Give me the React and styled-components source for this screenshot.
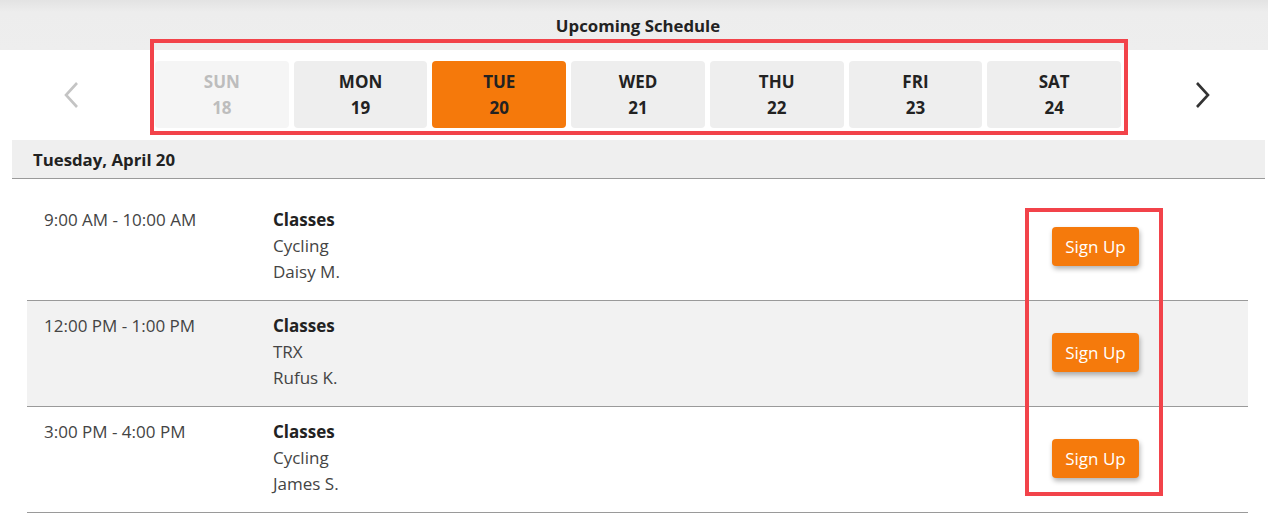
import React from 'react';
import styled, { createGlobalStyle } from 'styled-components';

const GlobalStyle = createGlobalStyle`
    html, body {
        margin: 0;
        padding: 0;
        background: #ffffff;
    }
    body {
        font-family: "Open Sans", "Noto Sans", sans-serif;
        color: #333333;
    }
`;

const days = [
    { name: 'SUN', date: 18, state: 'past' },
    { name: 'MON', date: 19 },
    { name: 'TUE', date: 20, state: 'active' },
    { name: 'WED', date: 21 },
    { name: 'THU', date: 22 },
    { name: 'FRI', date: 23 },
    { name: 'SAT', date: 24 }
];

const sessions = [
    { time: '9:00 AM - 10:00 AM', type: 'Classes', name: 'Cycling', coach: 'Daisy M.' },
    { time: '12:00 PM - 1:00 PM', type: 'Classes', name: 'TRX', coach: 'Rufus K.', shaded: true },
    { time: '3:00 PM - 4:00 PM', type: 'Classes', name: 'Cycling', coach: 'James S.' }
];

function Chevron({ dir, color }) {
    const points = dir === 'left' ? '14,2 3,14 14,26' : '2,2 13,14 2,26';
    return (
        <svg width="16" height="28" viewBox="0 0 16 28">
            <polyline points={points} fill="none" stroke={color} strokeWidth="2.6" strokeLinecap="butt" strokeLinejoin="miter" />
        </svg>
    );
}

export default function App() {
    return (
        <>
            <GlobalStyle />
            <Page>
                <Header>Upcoming Schedule</Header>

                <WeekNav>
                    <NavButton $side="left">
                        <Chevron dir="left" color="#c4c4c4" />
                    </NavButton>

                    <DayGrid>
                        {days.map(day => (
                            <DayCell key={day.name} $state={day.state}>
                                <span>{day.name}</span>
                                <span>{day.date}</span>
                            </DayCell>
                        ))}
                        <Highlight $top={-22} $left={-5} $right={-7} $bottom={-7} />
                    </DayGrid>

                    <NavButton $side="right">
                        <Chevron dir="right" color="#333333" />
                    </NavButton>
                </WeekNav>

                <DateBar>Tuesday, April 20</DateBar>

                <SessionList>
                    {sessions.map((s, index) => (
                        <SessionRow key={index} $shaded={s.shaded}>
                            <Time>{s.time}</Time>
                            <Details>
                                <strong>{s.type}</strong>
                                <span>{s.name}</span>
                                <span>{s.coach}</span>
                            </Details>
                            <SignUpButton>Sign Up</SignUpButton>
                        </SessionRow>
                    ))}
                    <ButtonHighlight />
                </SessionList>
            </Page>
        </>
    );
}

const Page = styled.div`
    width: 1268px;
    min-height: 521px;
    background: #ffffff;
`;

const Header = styled.header`
    height: 50px;
    display: flex;
    align-items: center;
    justify-content: center;
    background: linear-gradient(#e3e3e3 0px, #ededed 12px, #eeeeee 100%);
    font-size: 16.8px;
    font-weight: 700;
    color: #222222;
    padding-left: 8px;
    box-sizing: border-box;
`;

const WeekNav = styled.nav`
    display: grid;
    grid-template-columns: 145px 966px 1fr;
    column-gap: 10px;
    padding-top: 11px;
    align-items: center;
`;

const NavButton = styled.div`
    display: flex;
    justify-content: center;
    align-items: center;
    height: 67px;
    padding: ${p => (p.$side === 'left' ? '0 4px 0 0' : '0 0 0 6px')};
`;

const DayGrid = styled.div`
    position: relative;
    display: grid;
    grid-template-columns: repeat(7, 1fr);
    gap: 5px;
`;

const DayCell = styled.div`
    display: flex;
    flex-direction: column;
    align-items: center;
    justify-content: center;
    height: 67px;
    border-radius: 4px;
    font-size: 17px;
    font-weight: 700;
    line-height: 26px;
    background: ${p => (p.$state === 'active' ? '#f5790b' : p.$state === 'past' ? '#f5f5f5' : '#eeeeee')};
    color: ${p => (p.$state === 'past' ? '#bdbdbd' : '#222222')};
`;

const Highlight = styled.div`
    position: absolute;
    top: ${p => p.$top}px;
    left: ${p => p.$left}px;
    right: ${p => p.$right}px;
    bottom: ${p => p.$bottom}px;
    border: 4px solid #f2434a;
    pointer-events: none;
`;

const DateBar = styled.div`
    margin: 12px 3px 0 12px;
    height: 38px;
    display: flex;
    align-items: center;
    padding-left: 21px;
    background: #efefef;
    border-bottom: 1px solid #9a9a9a;
    font-size: 16.8px;
    font-weight: 700;
    color: #222222;
`;

const SessionList = styled.ul`
    position: relative;
    list-style: none;
    margin: 16px 20px 0 27px;
    padding: 0;
`;

const SessionRow = styled.li`
    display: grid;
    grid-template-columns: 229px 1fr auto;
    align-items: start;
    padding: 12px 109px 15px 17px;
    border-bottom: 1px solid #9a9a9a;
    background: ${p => (p.$shaded ? '#f2f2f2' : 'transparent')};
    font-size: 17px;
    line-height: 26px;
`;

const Time = styled.div`
    color: #444444;
`;

const Details = styled.div`
    display: flex;
    flex-direction: column;
    color: #444444;

    strong {
        font-weight: 700;
        color: #222222;
    }
`;

const SignUpButton = styled.button`
    align-self: center;
    width: 87px;
    height: 39px;
    border: none;
    border-radius: 4px;
    background: #f57a0c;
    color: #ffffff;
    font-family: inherit;
    font-size: 17px;
    box-shadow: 1px 3px 5px rgba(0, 0, 0, 0.3);
    cursor: pointer;
`;

const ButtonHighlight = styled.div`
    position: absolute;
    top: 13px;
    left: 998px;
    width: 138px;
    height: 288px;
    box-sizing: border-box;
    border: 4px solid #f2434a;
    pointer-events: none;
`;
